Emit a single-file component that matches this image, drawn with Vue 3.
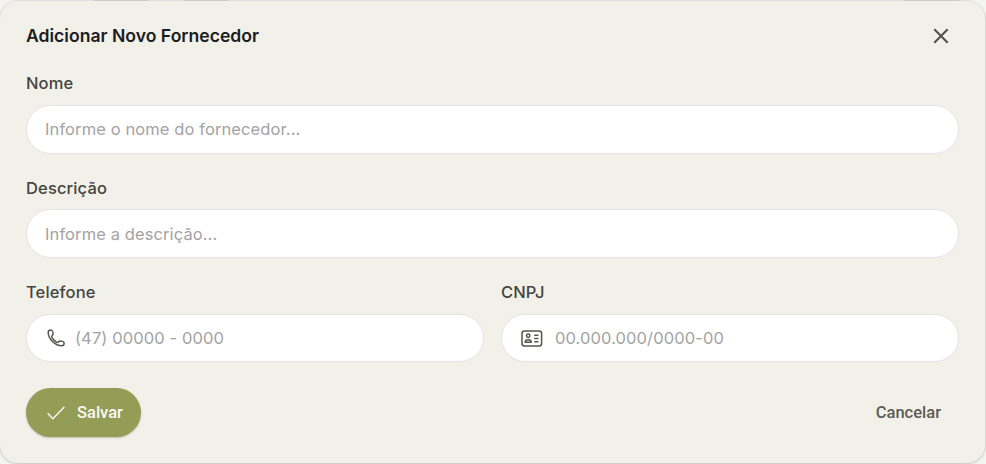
<script setup>
const rows = [
  [{ id: 'nome', label: 'Nome', placeholder: 'Informe o nome do fornecedor...' }],
  [{ id: 'descricao', label: 'Descrição', placeholder: 'Informe a descrição...' }],
  [
    { id: 'telefone', label: 'Telefone', placeholder: '(47) 00000 - 0000', icon: 'phone' },
    { id: 'cnpj', label: 'CNPJ', placeholder: '00.000.000/0000-00', icon: 'card' },
  ],
]
</script>

<template>
  <main class="page">
    <form class="dialog" @submit.prevent>
      <header class="header">
        <h2 class="title">Adicionar Novo Fornecedor</h2>
        <button class="close" type="button" aria-label="Fechar">
          <svg width="16" height="16" viewBox="0 0 16 16"><path d="M1.3 1.3 14.7 14.7M14.7 1.3 1.3 14.7" /></svg>
        </button>
      </header>

      <div v-for="(row, i) in rows" :key="i" class="row" :class="'row-' + i">
        <div v-for="field in row" :key="field.id" class="field">
          <label class="label" :for="field.id">{{ field.label }}</label>
          <div class="control" :class="field.icon">
            <svg v-if="field.icon === 'phone'" class="icon" width="18" height="18" viewBox="0 0 18 18">
              <path d="M1.2 3.2C1.2 9.8 8.2 16.8 14.8 16.8C16.3 16.8 17.1 15.5 17.1 14C17.1 12.7 14.4 11.9 12.9 11.9C11.9 11.9 11.5 13.4 10.5 13.4C8.8 13.4 4.7 9.3 4.7 7.5C4.7 6.5 6.1 6.1 6.1 5.1C6.1 3.6 5.3 .9 4 .9C2.5 .9 1.2 1.7 1.2 3.2Z" />
            </svg>
            <svg v-if="field.icon === 'card'" class="icon" width="22" height="17" viewBox="0 0 22 17">
              <rect x="1" y="1" width="19.6" height="15" rx="2.5" />
              <circle cx="7.2" cy="5.8" r="1.7" />
              <path d="M4.2 12.2C4.2 10.2 5.5 9.7 7.2 9.7S10.2 10.2 10.2 12.2ZM13.2 5.3h4.2M13.2 8.5h4.2M13.2 11.7h4.2" />
            </svg>
            <input :id="field.id" class="input" type="text" :placeholder="field.placeholder" />
          </div>
        </div>
      </div>

      <footer class="footer">
        <button class="save" type="submit">
          <svg width="18" height="14" viewBox="0 0 18 14"><path d="M.7 7.3 5.8 12.7 17.3 1" /></svg>
          <span>Salvar</span>
        </button>
        <button class="cancel" type="button">Cancelar</button>
      </footer>
    </form>
  </main>
</template>

<style>
body {
  background: #f4f4f3;
}
</style>

<style scoped>
.page {
  box-sizing: border-box;
  height: 464px;
  padding: 1px 1px 1px 0;
  overflow: hidden;
  font-family: Inter, sans-serif;
  background: linear-gradient(90deg, transparent 94px, #dcdcd8 94px 149px, transparent 149px 184px, #dcdcd8 184px 229px, transparent 229px 904px, #dcdcd8 904px 959px, transparent 959px) top / 100% 1px no-repeat;
}
.dialog {
  box-sizing: border-box;
  height: 462px;
  padding: 25px 26px;
  border-radius: 18px;
  background: #f1f1ea;
  box-shadow: 0 0 0 1px #0000000f, 0 1px 3px #00000026;
}
.header {
  display: flex;
  align-items: center;
  justify-content: space-between;
  height: 20px;
}
.title {
  margin: 0;
  font-size: 17.6px;
  line-height: 20px;
  font-weight: 600;
  color: #1c1c1e;
}
button {
  border: 0;
  padding: 0;
  background: none;
  font: inherit;
}
.close {
  display: flex;
  margin-right: 10px;
}
.close svg {
  fill: none;
  stroke: #504f4b;
  stroke-width: 2;
}
.row {
  display: flex;
  gap: 17px;
  margin-top: 24px;
}
.row-0 {
  margin-top: 27px;
}
.field {
  flex: 1;
  min-width: 0;
}
.label {
  display: block;
  height: 20px;
  margin-bottom: 12px;
  font-size: 16.5px;
  letter-spacing: 0.14px;
  line-height: 20px;
  font-weight: 500;
  color: #444441;
}
.row-1 .label {
  margin-bottom: 11px;
}
.control {
  box-sizing: border-box;
  display: flex;
  align-items: center;
  height: 49px;
  padding: 0 18px;
  border: 1px solid #e3e3e1;
  border-radius: 25px;
  background: #fff;
}
.row-0 .control {
  padding-bottom: 2px;
}
.row-2 .control {
  height: 48px;
}
.control.phone {
  padding-left: 20px;
}
.control.card {
  padding-left: 19px;
}
.icon {
  flex: none;
  fill: none;
  stroke: #55544f;
  stroke-width: 1.5;
  margin-right: 10px;
}
.card .icon {
  margin-right: 12px;
}
.input {
  flex: 1;
  min-width: 0;
  padding: 0;
  border: 0;
  outline: 0;
  background: transparent;
  font: 400 16.5px/24px Inter, sans-serif;
  letter-spacing: 0.1px;
}
.input::placeholder {
  color: #a3a3a3;
  opacity: 1;
}
.footer {
  display: flex;
  align-items: center;
  justify-content: space-between;
  margin-top: 26px;
  font-family: Roboto, sans-serif;
  font-size: 16.5px;
  font-weight: 500;
}
.save {
  display: flex;
  align-items: center;
  gap: 12px;
  height: 49px;
  padding: 0 18px 0 21px;
  border-radius: 25px;
  background: #949d56;
  color: #fafaf5;
  box-shadow: 0 1px 2px #0003;
}
.save svg {
  fill: none;
  stroke: #fafaf5;
  stroke-width: 1.4;
}
.cancel {
  margin-right: 18px;
  color: #5c5b55;
}
</style>
